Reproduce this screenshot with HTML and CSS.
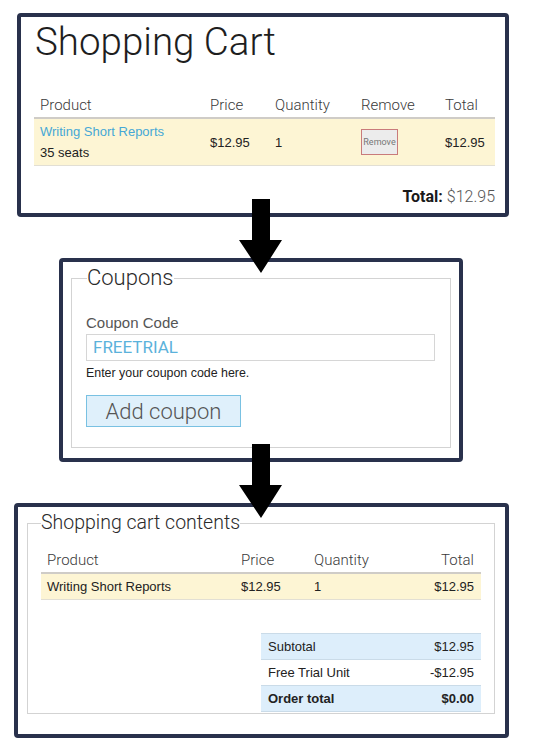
FILE: index.html
```html
<!DOCTYPE html>
<html>
<head>
<meta charset="utf-8">
<link rel="stylesheet" href="styles.css">
</head>
<body>
<div class="page">
  <section class="box box-cart">
    <h1 class="title">Shopping Cart</h1>
    <table class="cart">
      <colgroup>
        <col class="c-prod"><col class="c-price"><col class="c-qty"><col class="c-rem"><col class="c-tot">
      </colgroup>
      <thead>
        <tr><th>Product</th><th>Price</th><th>Quantity</th><th>Remove</th><th>Total</th></tr>
      </thead>
      <tbody>
        <tr>
          <td><a class="prod-link">Writing Short Reports</a><br><span>35 seats</span></td>
          <td>$12.95</td>
          <td>1</td>
          <td><button class="remove">Remove</button></td>
          <td>$12.95</td>
        </tr>
      </tbody>
    </table>
    <div class="grand"><b>Total:</b> <span>$12.95</span></div>
  </section>

  <div class="connector">
    <svg class="arrow" width="44" height="75" viewBox="0 0 44 75"><polygon points="13,0 31,0 31,41 43,41 22,74 0,41 13,41" fill="#000"/></svg>
  </div>

  <section class="box box-coupon">
    <fieldset class="fs fs-coupon">
      <legend class="legend-big">Coupons</legend>
      <label class="field-label">Coupon Code</label>
      <div class="input">FREETRIAL</div>
      <div class="help">Enter your coupon code here.</div>
      <button class="add">Add coupon</button>
    </fieldset>
  </section>

  <div class="connector">
    <svg class="arrow" width="44" height="75" viewBox="0 0 44 75"><polygon points="13,0 31,0 31,41 43,41 22,74 0,41 13,41" fill="#000"/></svg>
  </div>

  <section class="box box-contents">
    <fieldset class="fs fs-contents">
      <legend class="legend-mid">Shopping cart contents</legend>
      <table class="contents">
        <colgroup>
          <col class="k-prod"><col class="k-price"><col class="k-qty"><col class="k-tot">
        </colgroup>
        <thead>
          <tr><th>Product</th><th>Price</th><th>Quantity</th><th class="right">Total</th></tr>
        </thead>
        <tbody>
          <tr><td>Writing Short Reports</td><td>$12.95</td><td>1</td><td class="right">$12.95</td></tr>
        </tbody>
      </table>
      <table class="totals">
        <tr class="blue"><td>Subtotal</td><td class="right">$12.95</td></tr>
        <tr><td>Free Trial Unit</td><td class="right">-$12.95</td></tr>
        <tr class="blue strong"><td>Order total</td><td class="right">$0.00</td></tr>
      </table>
    </fieldset>
  </section>
</div>
</body>
</html>
```
FILE: styles.css
```css
* { box-sizing: border-box; }
html, body { margin: 0; padding: 0; background: #fff; }
body { font-family: "Liberation Sans", Arial, sans-serif; color: #222; }
.page { position: relative; width: 533px; height: 753px; overflow: hidden; padding-top: 13px; }

.box {
  border: 4px solid #29314c;
  border-radius: 4px;
  background: #fff;
}
.box-cart { margin-left: 17px; width: 492px; height: 204px; padding: 0 10px 0 13px; }
.box-coupon { margin: 41px 0 0 59px; width: 404px; height: 204px; padding: 3px 8px 0 8px; }
.box-contents { margin: 41px 0 0 14px; width: 495px; height: 235px; padding: 4px 10px 0 9px; }

.connector { position: relative; height: 0; }
.arrow { position: absolute; left: 239px; top: -18px; display: block; }

.title {
  font-family: Roboto, sans-serif; font-weight: 300;
  font-size: 38.5px; line-height: 48px; margin: 1px 0 24px 1px; color: #1e1e1e;
}

table { border-collapse: collapse; border-spacing: 0; }
th {
  font-family: Roboto, sans-serif; font-weight: 300; font-size: 15px; line-height: 20px;
  color: #3a3a3a; text-align: left; padding: 5px 6px 2px;
  border-bottom: 2px solid #cfccc7;
}
td { font-size: 13px; line-height: 21px; padding: 2px 6px; color: #222; }
tbody tr td { background: #fdf5d4; border-bottom: 1px solid #e2dfd4; }
.right { text-align: right; }

.cart { width: 461px; table-layout: fixed; }
.c-prod { width: 170px; } .c-price { width: 65px; } .c-qty { width: 86px; } .c-rem { width: 84px; } .c-tot { width: 56px; }
.prod-link { color: #46a8d6; }
.remove {
  font-family: Roboto, sans-serif; font-size: 9px; color: #777;
  background: #ececec; border: 1px solid #c97b7b;
  width: 37px; height: 26px; padding: 0; display: block;
}
.grand {
  font-family: Roboto, sans-serif; font-size: 16px; line-height: 20px;
  text-align: right; margin-top: 21px; color: #1a1a1a;
}
.grand b { font-weight: 700; }
.grand span { font-weight: 300; color: #555; }

.fs {
  border: 1px solid #d3d3d3; margin: 0; min-width: 0;
}
.fs-coupon { padding: 23px 15px 19px 14px; height: 183px; }
.fs-contents { padding: 10px 13px 13px 13px; height: 203px; }
legend { padding: 0; font-family: Roboto, sans-serif; font-weight: 300; color: #2a2a2a; }
.legend-big { font-size: 22px; line-height: 26px; margin-left: 1px; }
.legend-mid { font-size: 19.5px; line-height: 24px; }

.field-label { display: block; font-size: 15px; line-height: 18px; color: #555; }
.input {
  margin-top: 2px; width: 349px; height: 27px; border: 1px solid #d6d6d6;
  font-family: Roboto, sans-serif; font-size: 17px; line-height: 25px; color: #5bb2db; padding-left: 6px;
}
.help { font-size: 12.4px; line-height: 15px; margin-top: 5px; color: #222; }
.add {
  margin-top: 14px; width: 155px; height: 32px; padding: 0;
  background: #dff0fb; border: 1px solid #79c1e2;
  font-family: Roboto, sans-serif; font-weight: 300; font-size: 22px; color: #555;
  display: block;
}

.contents { width: 440px; table-layout: fixed; }
.k-prod { width: 194px; } .k-price { width: 73px; } .k-qty { width: 92px; } .k-tot { width: 81px; }
.contents th.right, .contents td.right { padding-right: 7px; }

.totals { width: 220px; margin: 33px 0 0 auto; }
.totals td { background: #fff; border-bottom: 0; border-top: 1px solid #cadbe8; padding: 2px 7px; line-height: 21px; }
.totals tr:last-child td { border-bottom: 1px solid #cadbe8; }
.totals tr.blue td { background: #ddeefb; }
.totals tr.strong td { font-weight: 700; }
```
